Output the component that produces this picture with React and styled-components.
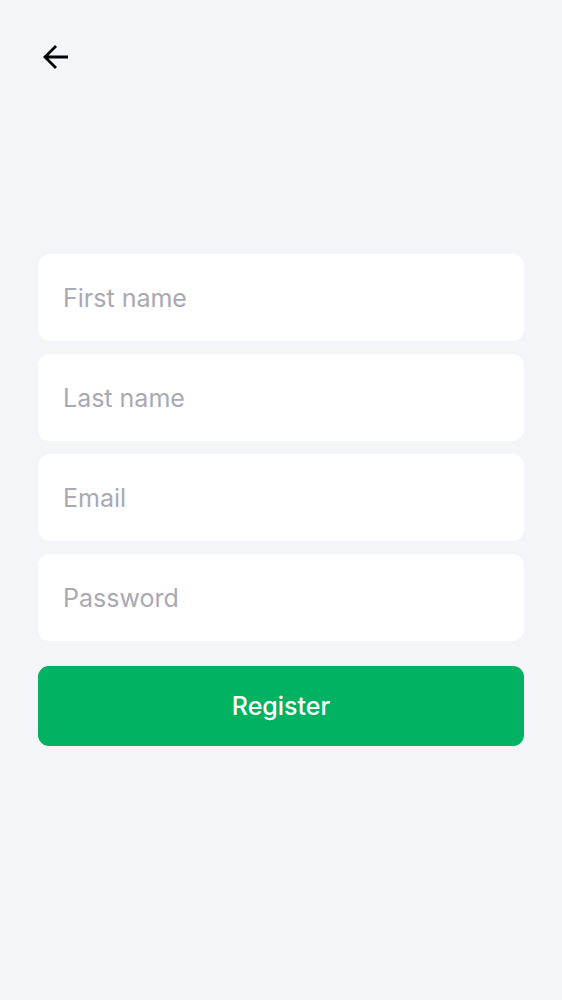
import React from "react";
import styled, { createGlobalStyle } from "styled-components";

const GlobalStyle = createGlobalStyle`
  html, body {
    margin: 0;
    padding: 0;
    background: #f4f5f9;
    font-family: Inter, "Noto Sans", sans-serif;
  }
  * {
    box-sizing: border-box;
  }
`;

const Page = styled.div`
  min-height: 1000px;
  background: #f4f5f9;
  padding: 0 38px;
`;

const Header = styled.div`
  height: 254px;
  padding-top: 43px;
`;

const BackButton = styled.button`
  display: flex;
  align-items: center;
  justify-content: center;
  width: 28px;
  height: 28px;
  margin-left: 4px;
  padding: 0;
  border: none;
  background: transparent;
  cursor: pointer;
`;

const Form = styled.form`
  display: flex;
  flex-direction: column;
  gap: 13px;
`;

const Input = styled.input`
  width: 100%;
  height: 87px;
  padding: 0 25px;
  border: none;
  border-radius: 12px;
  background: #ffffff;
  font-family: Inter, "Noto Sans", sans-serif;
  font-size: 25px;
  color: #1c1c22;
  outline: none;

  &::placeholder {
    color: #a9a9b3;
  }
`;

const SubmitButton = styled.button`
  width: 100%;
  height: 80px;
  margin-top: 12px;
  border: none;
  border-radius: 11px;
  background: #00b261;
  color: #ffffff;
  font-family: Inter, "Noto Sans", sans-serif;
  font-size: 25px;
  font-weight: 500;
  cursor: pointer;
`;

const ArrowIcon = () => (
  <svg width="28" height="28" viewBox="0 0 28 28" fill="none">
    <path
      d="M26 14H3M14 3L3 14L14 25"
      stroke="#000"
      strokeWidth="2.8"
      strokeLinecap="butt"
      strokeLinejoin="miter"
    />
  </svg>
);

export default function App() {
  return (
    <>
      <GlobalStyle />
      <Page>
        <Header>
          <BackButton type="button" aria-label="Back">
            <ArrowIcon />
          </BackButton>
        </Header>
        <Form onSubmit={(e) => e.preventDefault()}>
          <Input type="text" placeholder="First name" />
          <Input type="text" placeholder="Last name" />
          <Input type="email" placeholder="Email" />
          <Input type="password" placeholder="Password" />
          <SubmitButton type="submit">Register</SubmitButton>
        </Form>
      </Page>
    </>
  );
}
